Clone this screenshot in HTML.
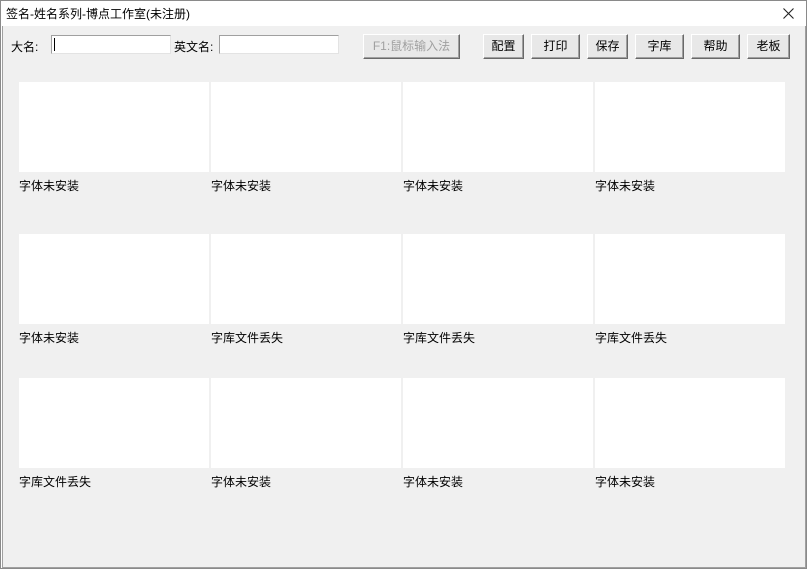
<!DOCTYPE html>
<html><head><meta charset="utf-8"><style>
*{margin:0;padding:0;box-sizing:border-box}
body{width:807px;height:569px;position:relative;background:#fff;font-family:"Liberation Sans","Noto Sans CJK SC",sans-serif;font-size:12px;color:#000;overflow:hidden}
.win{position:absolute;left:0;top:0;width:807px;height:569px;border:1px solid #8a8a8a}
.title{position:absolute;left:6px;top:5px;font-size:12px}
.client{position:absolute;left:2px;top:26px;width:804px;height:542px;background:#f0f0f0;border-left:1px solid #a0a0a0;border-bottom:1px solid #a0a0a0;border-right:1px solid #a0a0a0}
.lbl{position:absolute;font-size:12px}
.inp{position:absolute;height:19px;background:#fff;border:1px solid;border-color:#a0a0a0 #e3e3e3 #e3e3e3 #a0a0a0}
.btn{position:absolute;top:34px;height:25px;background:#e8e8e8;border:1px solid;border-color:#fff #696969 #696969 #fff;box-shadow:inset -1px -1px 0 #a0a0a0;text-align:center;line-height:23px;font-size:12px}
.cell{position:absolute;width:190px;height:90px;background:#fff}
.cap{position:absolute;font-size:12px}
</style></head><body>
<div class="win"></div>
<div class="title">签名-姓名系列-博点工作室(未注册)</div>
<svg style="position:absolute;left:783px;top:8px" width="11" height="11"><path d="M0.5 0.5L10.5 10.5M10.5 0.5L0.5 10.5" stroke="#222" stroke-width="1.1" fill="none"/></svg>
<div class="client"></div>
<div class="lbl" style="left:11px;top:38px">大名:</div>
<div class="inp" style="left:51px;top:35px;width:120px"><div style="position:absolute;left:2px;top:2px;width:1px;height:13px;background:#000"></div></div>
<div class="lbl" style="left:174px;top:38px">英文名:</div>
<div class="inp" style="left:219px;top:35px;width:120px"></div>
<div class="btn" style="left:363px;width:97px;color:#a0a0a0">F1:鼠标输入法</div>
<div class="btn" style="left:483px;width:41px">配置</div>
<div class="btn" style="left:531px;width:49px">打印</div>
<div class="btn" style="left:587px;width:41px">保存</div>
<div class="btn" style="left:635px;width:49px">字库</div>
<div class="btn" style="left:691px;width:49px">帮助</div>
<div class="btn" style="left:747px;width:43px">老板</div>

<div class="cell" style="left:19px;top:82px"></div><div class="cell" style="left:211px;top:82px"></div><div class="cell" style="left:403px;top:82px"></div><div class="cell" style="left:595px;top:82px"></div>
<div class="cap" style="left:19px;top:177px">字体未安装</div><div class="cap" style="left:211px;top:177px">字体未安装</div><div class="cap" style="left:403px;top:177px">字体未安装</div><div class="cap" style="left:595px;top:177px">字体未安装</div>

<div class="cell" style="left:19px;top:234px"></div><div class="cell" style="left:211px;top:234px"></div><div class="cell" style="left:403px;top:234px"></div><div class="cell" style="left:595px;top:234px"></div>
<div class="cap" style="left:19px;top:329px">字体未安装</div><div class="cap" style="left:211px;top:329px">字库文件丢失</div><div class="cap" style="left:403px;top:329px">字库文件丢失</div><div class="cap" style="left:595px;top:329px">字库文件丢失</div>

<div class="cell" style="left:19px;top:378px"></div><div class="cell" style="left:211px;top:378px"></div><div class="cell" style="left:403px;top:378px"></div><div class="cell" style="left:595px;top:378px"></div>
<div class="cap" style="left:19px;top:473px">字库文件丢失</div><div class="cap" style="left:211px;top:473px">字体未安装</div><div class="cap" style="left:403px;top:473px">字体未安装</div><div class="cap" style="left:595px;top:473px">字体未安装</div>
</body></html>
